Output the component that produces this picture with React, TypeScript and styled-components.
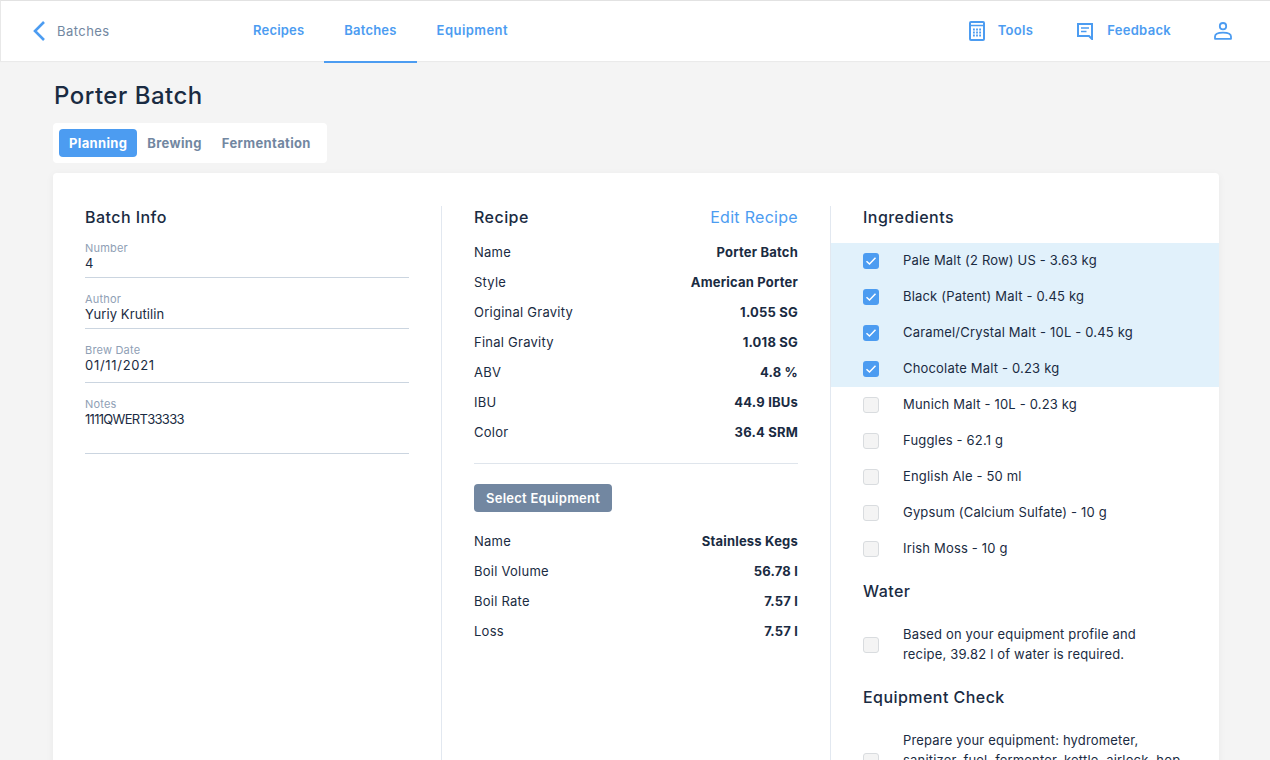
import React from 'react';
import styled, { createGlobalStyle } from 'styled-components';

const blue = '#4c9cf1';
const ink = '#1a2b42';
const slate = '#7287a1';

const GlobalStyle = createGlobalStyle`
  html, body {
    margin: 0;
    padding: 0;
    height: 760px;
    overflow: hidden;
    background: #f4f4f4;
    font-family: 'Inter', 'Open Sans', sans-serif;
    color: ${ink};
  }
  * { box-sizing: border-box; }
`;

const recipeRows = [
  ['Name', 'Porter Batch'],
  ['Style', 'American Porter'],
  ['Original Gravity', '1.055 SG'],
  ['Final Gravity', '1.018 SG'],
  ['ABV', '4.8 %'],
  ['IBU', '44.9 IBUs'],
  ['Color', '36.4 SRM'],
];

const equipmentRows = [
  ['Name', 'Stainless Kegs'],
  ['Boil Volume', '56.78 l'],
  ['Boil Rate', '7.57 l'],
  ['Loss', '7.57 l'],
];

const ingredients = [
  { name: 'Pale Malt (2 Row) US - 3.63 kg', done: true },
  { name: 'Black (Patent) Malt - 0.45 kg', done: true },
  { name: 'Caramel/Crystal Malt - 10L - 0.45 kg', done: true },
  { name: 'Chocolate Malt - 0.23 kg', done: true },
  { name: 'Munich Malt - 10L - 0.23 kg', done: false },
  { name: 'Fuggles - 62.1 g', done: false },
  { name: 'English Ale - 50 ml', done: false },
  { name: 'Gypsum (Calcium Sulfate) - 10 g', done: false },
  { name: 'Irish Moss - 10 g', done: false },
];

function Check({ on }: { on: boolean }) {
  return (
    <Box $on={on}>
      {on && (
        <svg width="12" height="10" viewBox="0 0 12 10" fill="none">
          <path d="M1.5 5.2 L4.5 8 L10.5 1.8" stroke="#fff" strokeWidth="1.5" />
        </svg>
      )}
    </Box>
  );
}

export default function App() {
  return (
    <>
      <GlobalStyle />
      <Header>
        <BackLink>
          <svg width="14" height="20" viewBox="0 0 14 20" fill="none">
            <path d="M12 1 L3 10 L12 19" stroke={blue} strokeWidth="2.6" />
          </svg>
          <BackText>Batches</BackText>
        </BackLink>
        <Nav>
          <NavItem>Recipes</NavItem>
          <NavItem $active>Batches</NavItem>
          <NavItem $track={0.45}>Equipment</NavItem>
        </Nav>
        <HeaderRight>
          <ToolLink $after={44}>
            <svg width="16" height="20" viewBox="0 0 16 20" fill="none">
              <rect x="1" y="1" width="14" height="18" rx="1" stroke={blue} strokeWidth="2" />
              <path d="M1 4.5 H15" stroke={blue} strokeWidth="1.5" />
              <path d="M4 8.5 H5.8 M7.1 8.5 H8.9 M10.2 8.5 H12 M4 11.5 H5.8 M7.1 11.5 H8.9 M10.2 11.5 H12 M4 14.5 H5.8 M7.1 14.5 H8.9 M10.2 14.5 H12" stroke={blue} strokeWidth="1.8" />
            </svg>
            <ToolText>Tools</ToolText>
          </ToolLink>
          <ToolLink $gap={14}>
            <svg width="16" height="17" viewBox="0 0 16 17" fill="none">
              <path d="M1 1 H15 V16 L12 13 H1 Z" stroke={blue} strokeWidth="2" />
              <path d="M4 5 H12 M4 8.5 H9.5" stroke={blue} strokeWidth="1.6" />
            </svg>
            <ToolText>Feedback</ToolText>
          </ToolLink>
          <UserIcon width="18" height="18" viewBox="0 0 18 18" fill="none">
            <circle cx="9" cy="4.2" r="3.2" stroke={blue} strokeWidth="1.8" />
            <path d="M1 16.8 V14.5 C1 12 4 10.6 9 10.6 C14 10.6 17 12 17 14.5 V16.8 Z" stroke={blue} strokeWidth="1.8" strokeLinejoin="round" />
          </UserIcon>
        </HeaderRight>
      </Header>

      <Page>
        <Title>Porter Batch</Title>
        <Tabs>
          <Tab $active>Planning</Tab>
          <Tab>Brewing</Tab>
          <Tab>Fermentation</Tab>
        </Tabs>

        <Card>
          <InfoColumn>
            <SectionHead $gap={13}>
              <SectionTitle>Batch Info</SectionTitle>
            </SectionHead>
            <Field $pad={6}>
              <FieldLabel>Number</FieldLabel>
              <FieldValue>4</FieldValue>
            </Field>
            <Field $pad={6}>
              <FieldLabel>Author</FieldLabel>
              <FieldValue>Yuriy Krutilin</FieldValue>
            </Field>
            <Field $pad={9}>
              <FieldLabel>Brew Date</FieldLabel>
              <FieldValue $track={0.7}>01/11/2021</FieldValue>
            </Field>
            <Field $pad={26}>
              <FieldLabel>Notes</FieldLabel>
              <FieldValue $track={-0.7}>1111QWERT33333</FieldValue>
            </Field>
          </InfoColumn>

          <RecipeColumn>
            <SectionHead $gap={9}>
              <SectionTitle>Recipe</SectionTitle>
              <EditLink>Edit Recipe</EditLink>
            </SectionHead>
            {recipeRows.map(([k, v]) => (
              <Row key={k}>
                <RowKey>{k}</RowKey>
                <RowValue>{v}</RowValue>
              </Row>
            ))}
            <Divider />
            <GrayButton>Select Equipment</GrayButton>
            {equipmentRows.map(([k, v]) => (
              <Row key={k}>
                <RowKey>{k}</RowKey>
                <RowValue>{v}</RowValue>
              </Row>
            ))}
          </RecipeColumn>

          <ChecklistColumn>
            <ChecklistHead $bottom={15}>Ingredients</ChecklistHead>
            {ingredients.map((item) => (
              <CheckRow key={item.name} $on={item.done}>
                <Check on={item.done} />
                <CheckText>{item.name}</CheckText>
              </CheckRow>
            ))}
            <ChecklistHead $top={13} $bottom={22}>Water</ChecklistHead>
            <CheckRow>
              <Check on={false} />
              <CheckText>
                Based on your equipment profile and
                <br />
                recipe, 39.82 l of water is required.
              </CheckText>
            </CheckRow>
            <ChecklistHead $top={20} $bottom={22}>Equipment Check</ChecklistHead>
            <CheckRow>
              <Check on={false} />
              <CheckText>
                Prepare your equipment: hydrometer,
                <br />
                sanitizer, fuel, fermenter, kettle, airlock, hop
                <br />
                bag.
              </CheckText>
            </CheckRow>
          </ChecklistColumn>
        </Card>
      </Page>
    </>
  );
}

const Header = styled.header`
  height: 61px;
  background: #fff;
  border-top: 1px solid #e2e2e2;
  border-left: 1px solid #e8e8e8;
  box-shadow: 0 1px 1px rgba(0, 0, 0, 0.04);
  display: flex;
  align-items: stretch;
`;

const BackLink = styled.div`
  width: 232px;
  padding-left: 31px;
  display: flex;
  align-items: center;
  gap: 11px;
`;

const BackText = styled.span`
  font-size: 13px;
  color: ${slate};
  letter-spacing: 0.45px;
  padding-bottom: 1px;
`;

const Nav = styled.nav`
  display: flex;
  align-items: stretch;
`;

const NavItem = styled.div<{ $active?: boolean; $track?: number }>`
  padding: 0 20px 2px;
  display: flex;
  align-items: center;
  font-size: 13px;
  font-weight: 600;
  letter-spacing: ${(p) => p.$track ?? 0.2}px;
  color: ${blue};
  border-bottom: 2px solid ${(p) => (p.$active ? blue : 'transparent')};
  margin-bottom: -2px;
`;

const HeaderRight = styled.div`
  margin-left: auto;
  padding-right: 38px;
  display: flex;
  align-items: center;
`;

const ToolLink = styled.div<{ $gap?: number; $after?: number }>`
  display: flex;
  align-items: center;
  gap: ${(p) => p.$gap ?? 13}px;
  margin-right: ${(p) => p.$after ?? 43}px;
  font-size: 13px;
  font-weight: 600;
  letter-spacing: 0.3px;
  color: ${blue};
`;

const ToolText = styled.span`
  padding-bottom: 3px;
`;

const UserIcon = styled.svg`
  display: block;
`;

const Page = styled.main`
  padding: 0 51px 0 53px;
`;

const Title = styled.h1`
  margin: 19px 0 0 1px;
  font-size: 24px;
  line-height: 32px;
  font-weight: 500;
  letter-spacing: 0.5px;
  color: ${ink};
`;

const Tabs = styled.div`
  margin-top: 11px;
  width: 274px;
  height: 40px;
  background: #fff;
  border-radius: 4px;
  padding: 6px;
  display: flex;
`;

const Tab = styled.div<{ $active?: boolean }>`
  height: 28px;
  padding: 0 10px;
  border-radius: 4px;
  display: flex;
  align-items: center;
  font-size: 13px;
  font-weight: 700;
  letter-spacing: 0.35px;
  background: ${(p) => (p.$active ? blue : 'transparent')};
  color: ${(p) => (p.$active ? '#fff' : slate)};
`;

const Card = styled.section`
  margin-top: 10px;
  background: #fff;
  border-radius: 4px;
  box-shadow: 0 2px 8px rgba(0, 0, 0, 0.05);
  height: 640px;
  padding-top: 33px;
  display: grid;
  grid-template-columns: 389px 389px 1fr;
`;

const InfoColumn = styled.div`
  padding: 0 32px;
  border-right: 1px solid #e2e8f0;
`;

const RecipeColumn = styled.div`
  padding: 0 32px;
  border-right: 1px solid #e2e8f0;
`;

const ChecklistColumn = styled.div`
  display: flex;
  flex-direction: column;
`;

const SectionHead = styled.div<{ $gap: number }>`
  height: 22px;
  display: flex;
  align-items: center;
  justify-content: space-between;
  margin-bottom: ${(p) => p.$gap}px;
`;

const SectionTitle = styled.h2`
  margin: 0;
  font-size: 16px;
  line-height: 22px;
  font-weight: 500;
  letter-spacing: 0.45px;
  color: ${ink};
`;

const EditLink = styled.span`
  font-size: 16px;
  letter-spacing: 0.3px;
  color: ${blue};
`;

const Field = styled.div<{ $pad: number }>`
  padding-bottom: ${(p) => p.$pad}px;
  border-bottom: 1px solid #cbd5e0;
  margin-bottom: 14px;
`;

const FieldLabel = styled.div`
  font-size: 11px;
  line-height: 15px;
  letter-spacing: 0.2px;
  color: #8fa0b5;
`;

const FieldValue = styled.div<{ $track?: number }>`
  font-size: 13px;
  line-height: 15px;
  letter-spacing: ${(p) => p.$track ?? 0.1}px;
  color: ${ink};
`;

const Row = styled.div`
  height: 30px;
  display: flex;
  align-items: center;
  justify-content: space-between;
  font-size: 13px;
`;

const RowKey = styled.span`
  letter-spacing: 0.25px;
  color: ${ink};
`;

const RowValue = styled.span`
  font-weight: 700;
  letter-spacing: 0.2px;
  color: ${ink};
`;

const Divider = styled.div`
  height: 1px;
  background: #dfe5ec;
  margin: 16px 0 20px;
`;

const GrayButton = styled.div`
  display: inline-flex;
  align-items: center;
  height: 28px;
  padding: 0 12px;
  background: ${slate};
  border-radius: 4px;
  color: #fff;
  font-size: 13px;
  font-weight: 600;
  letter-spacing: 0.25px;
  margin-bottom: 14px;
`;

const ChecklistHead = styled.h2<{ $top?: number; $bottom: number }>`
  margin: ${(p) => p.$top ?? 0}px 0 ${(p) => p.$bottom}px 32px;
  font-size: 16px;
  line-height: 22px;
  font-weight: 500;
  letter-spacing: 0.45px;
  color: ${ink};
`;

const CheckRow = styled.div<{ $on?: boolean }>`
  min-height: 36px;
  padding: 0 32px;
  display: flex;
  align-items: center;
  gap: 24px;
  background: ${(p) => (p.$on ? '#e1f1fb' : 'transparent')};
`;

const CheckText = styled.span`
  font-size: 13px;
  line-height: 20px;
  letter-spacing: 0.18px;
  padding-bottom: 2px;
  color: ${ink};
`;

const Box = styled.div<{ $on: boolean }>`
  width: 16px;
  height: 16px;
  flex: none;
  border-radius: 3px;
  display: flex;
  align-items: center;
  justify-content: center;
  background: ${(p) => (p.$on ? blue : '#f4f4f4')};
  border: ${(p) => (p.$on ? 'none' : '1.5px solid #d9dcdf')};
`;
